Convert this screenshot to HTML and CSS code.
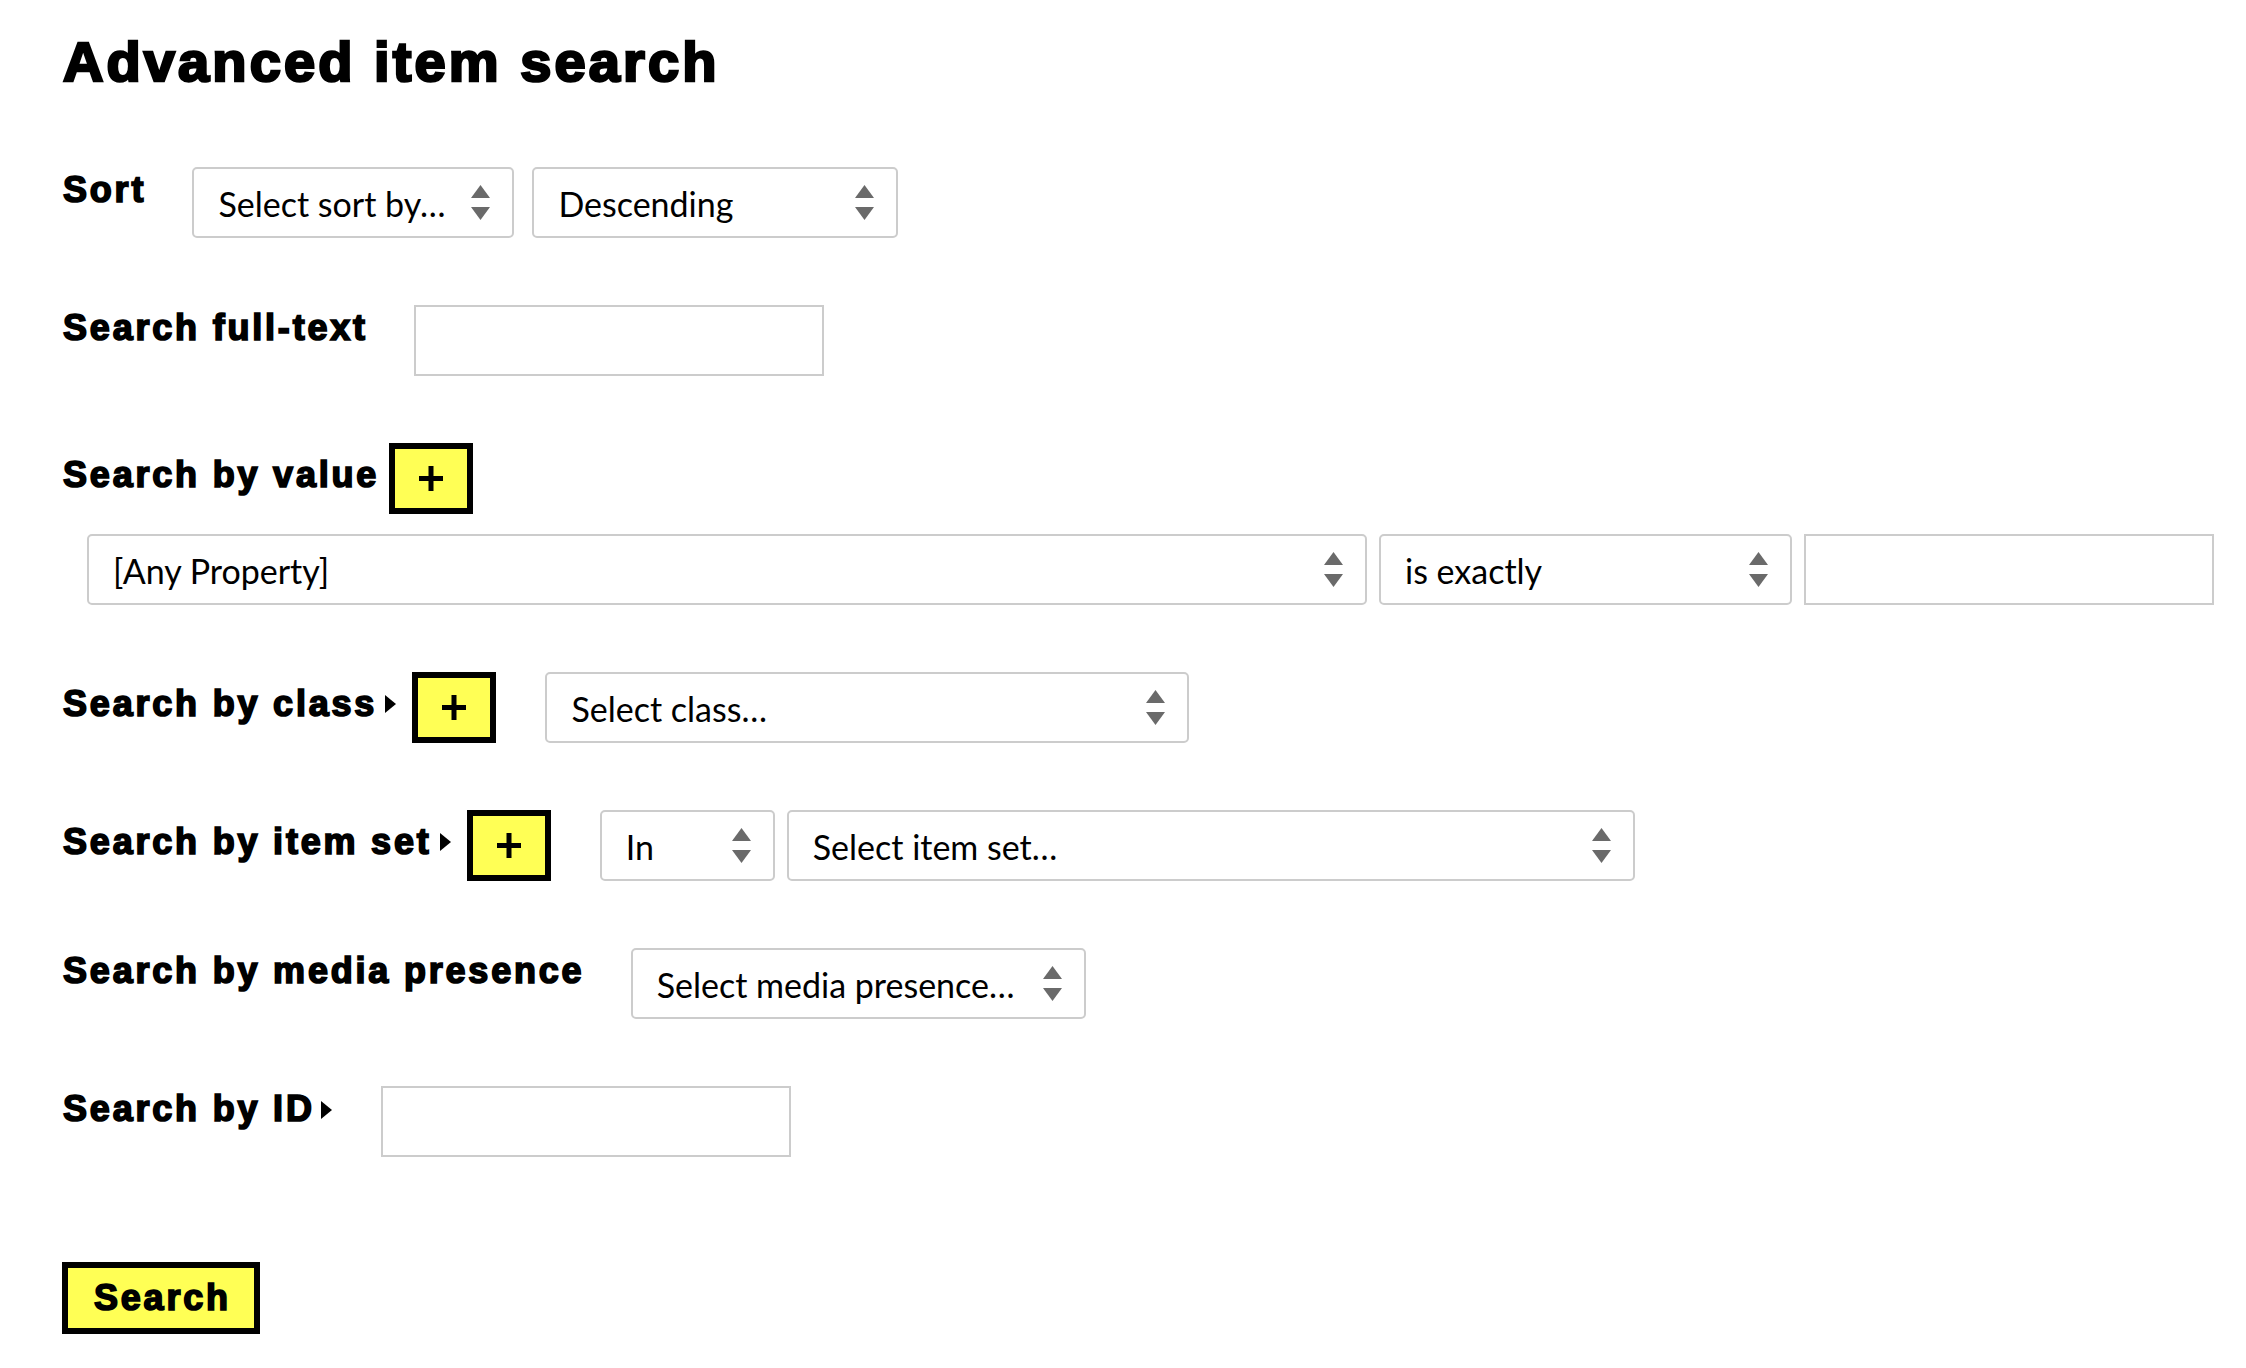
FILE: index.html
```html
<!DOCTYPE html>
<html lang="en">
<head>
<meta charset="utf-8">
<title>Advanced item search</title>
<link rel="stylesheet" href="styles.css">
</head>
<body>
<h1 class="title">Advanced item search</h1>
<form class="search-form">
  <div class="field">
    <h3 class="label">Sort</h3>
    <div class="controls">
      <div class="select w-sortby">
        <select><option>Select sort by…</option></select>
        <svg class="arrows" width="19" height="36" viewBox="0 0 19 36"><polygon points="0,13 9.5,0 19,13"/><polygon points="0,22 19,22 9.5,35"/></svg>
      </div>
      <div class="select w-order">
        <select><option>Descending</option></select>
        <svg class="arrows" width="19" height="36" viewBox="0 0 19 36"><polygon points="0,13 9.5,0 19,13"/><polygon points="0,22 19,22 9.5,35"/></svg>
      </div>
    </div>
  </div>

  <div class="field">
    <h3 class="label">Search full-text</h3>
    <input class="text-input" type="text">
  </div>

  <div class="stack">
    <div class="label-group">
      <h3 class="label label-btn">Search by value</h3>
      <button type="button" class="add add-value"><svg width="24" height="25" viewBox="0 0 24 25"><rect x="9.5" y="0" width="5" height="25"/><rect x="0" y="10" width="24" height="5"/></svg></button>
    </div>
    <div class="value-row">
      <div class="select w-prop">
        <select><option>[Any Property]</option></select>
        <svg class="arrows" width="19" height="36" viewBox="0 0 19 36"><polygon points="0,13 9.5,0 19,13"/><polygon points="0,22 19,22 9.5,35"/></svg>
      </div>
      <div class="select w-type">
        <select><option>is exactly</option></select>
        <svg class="arrows" width="19" height="36" viewBox="0 0 19 36"><polygon points="0,13 9.5,0 19,13"/><polygon points="0,22 19,22 9.5,35"/></svg>
      </div>
      <input class="text-input" type="text">
    </div>
  </div>

  <div class="field">
    <div class="label-group">
      <h3 class="label label-btn">Search by class</h3>
      <svg class="caret caret-btn" width="11" height="18" viewBox="0 0 11 18"><polygon points="0,0 11,9 0,18"/></svg>
      <button type="button" class="add"><svg width="24" height="25" viewBox="0 0 24 25"><rect x="9.5" y="0" width="5" height="25"/><rect x="0" y="10" width="24" height="5"/></svg></button>
    </div>
    <div class="select w-class">
      <select><option>Select class…</option></select>
      <svg class="arrows" width="19" height="36" viewBox="0 0 19 36"><polygon points="0,13 9.5,0 19,13"/><polygon points="0,22 19,22 9.5,35"/></svg>
    </div>
  </div>

  <div class="field">
    <div class="label-group">
      <h3 class="label label-btn">Search by item set</h3>
      <svg class="caret caret-btn" width="11" height="18" viewBox="0 0 11 18"><polygon points="0,0 11,9 0,18"/></svg>
      <button type="button" class="add"><svg width="24" height="25" viewBox="0 0 24 25"><rect x="9.5" y="0" width="5" height="25"/><rect x="0" y="10" width="24" height="5"/></svg></button>
    </div>
    <div class="controls controls-tight">
      <div class="select w-in">
        <select><option>In</option></select>
        <svg class="arrows" width="19" height="36" viewBox="0 0 19 36"><polygon points="0,13 9.5,0 19,13"/><polygon points="0,22 19,22 9.5,35"/></svg>
      </div>
      <div class="select w-set">
        <select><option>Select item set…</option></select>
        <svg class="arrows" width="19" height="36" viewBox="0 0 19 36"><polygon points="0,13 9.5,0 19,13"/><polygon points="0,22 19,22 9.5,35"/></svg>
      </div>
    </div>
  </div>

  <div class="field">
    <h3 class="label">Search by media presence</h3>
    <div class="select w-media">
      <select><option>Select media presence…</option></select>
      <svg class="arrows" width="19" height="36" viewBox="0 0 19 36"><polygon points="0,13 9.5,0 19,13"/><polygon points="0,22 19,22 9.5,35"/></svg>
    </div>
  </div>

  <div class="field">
    <div class="label-group">
      <h3 class="label">Search by ID</h3>
      <svg class="caret caret-plain" width="11" height="18" viewBox="0 0 11 18"><polygon points="0,0 11,9 0,18"/></svg>
    </div>
    <input class="text-input" type="text">
  </div>

  <div class="submit-row">
    <button type="submit" class="submit">Search</button>
  </div>
</form>
</body>
</html>
```

FILE: styles.css
```css
html, body {
  background: #fff;
}

body {
  margin: 0;
  padding: 30px 0 0 63px;
  font-family: "Liberation Sans", Arial, sans-serif;
  color: #000;
}

.title {
  margin: 0 0 73px;
  font-size: 56px;
  line-height: 64px;
  font-weight: 700;
  letter-spacing: 3.1px;
  -webkit-text-stroke: 2.6px #000;
  white-space: nowrap;
}

.search-form {
  display: flex;
  flex-direction: column;
  gap: 67px;
}

.field {
  display: flex;
  align-items: flex-start;
  gap: 49px;
}

.stack {
  display: flex;
  flex-direction: column;
  gap: 20px;
}

.label-group {
  display: flex;
  align-items: flex-start;
}

.label {
  margin: 1px -2.8px 0 0;
  font-size: 36px;
  line-height: 44px;
  font-weight: 700;
  letter-spacing: 2.8px;
  -webkit-text-stroke: 1.7px #000;
  white-space: nowrap;
}

.label-btn {
  margin-top: 10px;
}

.caret {
  fill: #000;
  flex: none;
}

.caret-btn {
  margin: 23px 16px 0 11px;
}

.caret-plain {
  margin: 15px 0 0 9px;
}

.add {
  flex: none;
  width: 84px;
  height: 71px;
  box-sizing: border-box;
  border: 6px solid #000;
  border-radius: 0;
  background: #ffff55;
  padding: 0;
  display: flex;
  align-items: center;
  justify-content: center;
  fill: #000;
}

.add-value {
  margin-left: 13px;
}

.controls {
  display: flex;
  gap: 18px;
}

.controls-tight {
  gap: 12px;
}

.value-row {
  display: flex;
  gap: 12px;
  margin-left: 24px;
}

.select {
  position: relative;
  flex: none;
  height: 71px;
}

.select select {
  -webkit-appearance: none;
  appearance: none;
  box-sizing: border-box;
  width: 100%;
  height: 71px;
  margin: 0;
  border: 2px solid #cccccc;
  border-radius: 5px;
  background: #fff;
  color: #000;
  font-family: Lato, "Open Sans", sans-serif;
  font-size: 34px;
  padding: 2px 56px 0 24px;
  outline: none;
}

.arrows {
  position: absolute;
  right: 24px;
  top: 18px;
  fill: #6a6a6a;
  pointer-events: none;
}

.w-sortby { width: 322px; }
.w-order { width: 366px; }
.w-prop { width: 1280px; }
.w-type { width: 413px; }
.w-class { width: 644px; }
.w-in { width: 175px; }
.w-set { width: 848px; }
.w-media { width: 455px; }

.text-input {
  flex: none;
  box-sizing: border-box;
  width: 410px;
  height: 71px;
  margin: 0;
  border: 2px solid #cccccc;
  border-radius: 0;
  background: #fff;
  padding: 0 16px;
  font-family: Lato, sans-serif;
  font-size: 34px;
}

.submit-row {
  margin-top: 38px;
}

.submit {
  box-sizing: border-box;
  width: 198px;
  height: 72px;
  margin: 0 0 0 -1px;
  border: 6px solid #000;
  border-radius: 0;
  background: #ffff55;
  color: #000;
  font-family: "Liberation Sans", Arial, sans-serif;
  font-size: 36px;
  font-weight: 700;
  letter-spacing: 2.8px;
  -webkit-text-stroke: 1.7px #000;
  padding: 0 0 0 2.8px;
  line-height: 1;
}
```
